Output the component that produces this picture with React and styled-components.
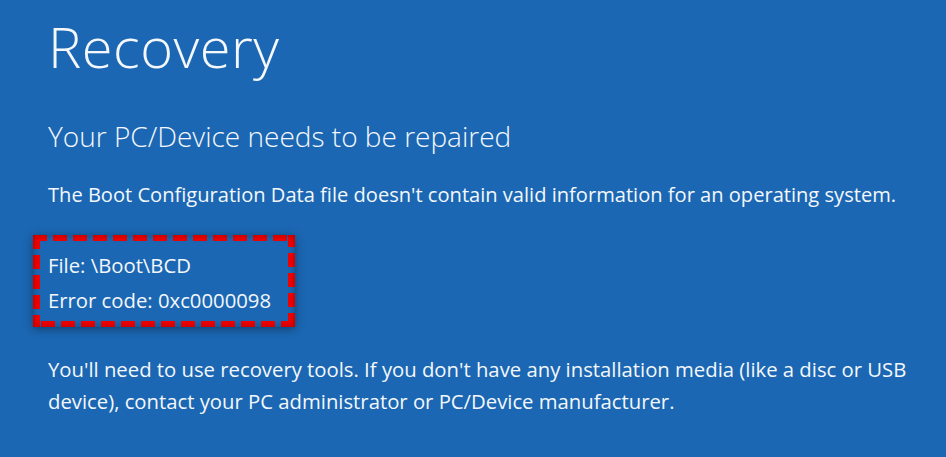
import styled, { createGlobalStyle } from "styled-components";

const GlobalStyle = createGlobalStyle`
  html, body {
    margin: 0;
    padding: 0;
    background: #1b67b3;
  }
  body {
    font-family: "Open Sans", "Noto Sans", "Liberation Sans", sans-serif;
    color: #f4f7fb;
  }
`;

const App = () => {
  return (
    <>
      <GlobalStyle />
      <Screen>
        <Title>Recovery</Title>
        <Subtitle>Your PC/Device needs to be repaired</Subtitle>
        <Message>
          The Boot Configuration Data file doesn't contain valid information for an operating system.
        </Message>
        <ErrorBox>
          <ErrorLine>File: \Boot\BCD</ErrorLine>
          <ErrorLine>Error code: 0xc0000098</ErrorLine>
        </ErrorBox>
        <Advice>
          You'll need to use recovery tools. If you don't have any installation media (like a disc or USB
          device), contact your PC administrator or PC/Device manufacturer.
        </Advice>
      </Screen>
    </>
  );
};

export default App;

const Screen = styled.div`
  width: 946px;
  height: 457px;
  box-sizing: border-box;
  padding: 14px 20px 0 48px;
  background: #1b67b3;
  overflow: hidden;
`;

const Title = styled.h1`
  margin: 0;
  font-size: 56px;
  font-weight: 300;
  line-height: 64px;
  letter-spacing: 0.5px;
`;

const Subtitle = styled.h2`
  margin: 40px 0 0;
  font-size: 28px;
  font-weight: 300;
  line-height: 36px;
`;

const Message = styled.p`
  margin: 28.2px 0 0;
  font-size: 20.1px;
  line-height: 26px;
  white-space: nowrap;
`;

const dash = "#f20000 0 14px, transparent 14px 20px";

const ErrorBox = styled.div`
  margin: 26.4px 0 0 -15px;
  width: 262px;
  box-sizing: border-box;
  padding: 13px 15px 9px;
  background:
    repeating-linear-gradient(90deg, ${dash}) left top / 100% 6px no-repeat,
    repeating-linear-gradient(270deg, ${dash}) left bottom / 100% 6px no-repeat,
    repeating-linear-gradient(180deg, ${dash}) left top / 7px 100% no-repeat,
    repeating-linear-gradient(0deg, ${dash}) right top / 7px 100% no-repeat;
  box-shadow: 0 2px 9px rgba(0, 0, 0, 0.4), inset 0 0 7px rgba(0, 0, 0, 0.3);
`;

const ErrorLine = styled.div`
  font-size: 20.3px;
  line-height: 35px;
  white-space: nowrap;
`;

const Advice = styled.p`
  margin: 26.2px 0 0;
  font-size: 20.3px;
  line-height: 32px;
  max-width: 875px;
`;
